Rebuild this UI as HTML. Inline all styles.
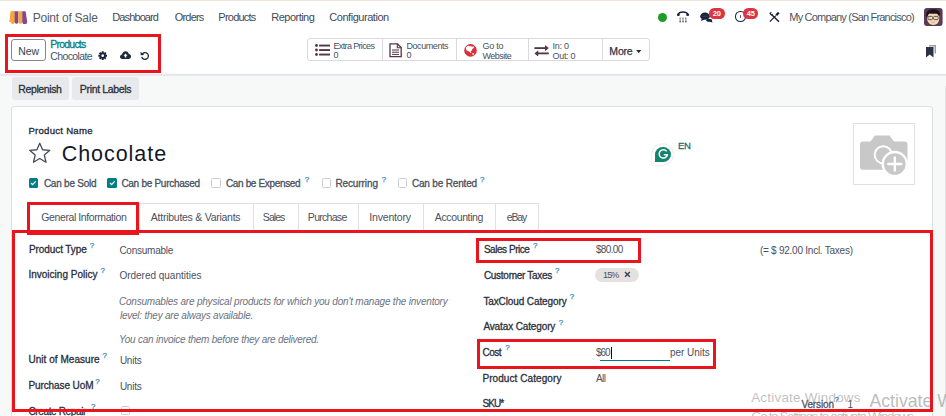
<!DOCTYPE html>
<html><head><meta charset="utf-8"><style>
html,body{margin:0;padding:0;width:946px;height:416px;overflow:hidden;background:#f7f8f8;font-family:"Liberation Sans",sans-serif;}
.a{position:absolute;box-sizing:border-box;}
.t{position:absolute;white-space:pre;font-family:"Liberation Sans",sans-serif;}
.qm{position:absolute;font-family:"Liberation Sans",sans-serif;font-size:8px;line-height:8px;font-weight:400;-webkit-text-stroke:0.25px;color:#3b8db5;}
.rb{position:absolute;box-sizing:border-box;border:3px solid #e9141c;}
</style></head><body>
<!-- top beige line -->
<div class="a" style="left:0;top:0;width:946px;height:1px;background:#efe3da"></div>
<!-- navbar + control panel white -->
<div class="a" style="left:0;top:1px;width:946px;height:72px;background:#fff"></div>
<div class="a" style="left:0;top:73.5px;width:946px;height:2px;background:#e6e8eb"></div>
<div class="a" style="left:944.6px;top:86px;width:1.4px;height:330px;background:#e4e4e4"></div>
<!-- logo -->
<svg class="a" style="left:9px;top:10.5px" width="19" height="13" viewBox="0 0 19 13">
  <path d="M1.8 0.3 H5.6 V10.8 a1.9 1.9 0 0 1 -3.8 0 H0.4 Z" fill="#f6a83b"/>
  <path d="M1.8 0.3 H5.6 V10.8 a1.9 1.9 0 0 1 -3.8 0 L0.6 10.8 Z" fill="#f6a83b"/>
  <path d="M5.6 0.3 H9.4 V10.8 a1.9 1.9 0 0 1 -3.8 0 Z" fill="#8b4784"/>
  <path d="M9.4 0.3 H13.2 V10.8 a1.9 1.9 0 0 1 -3.8 0 Z" fill="#f6a83b"/>
  <path d="M13.2 0.3 H16.6 L18.2 10.8 a2.1 2.1 0 0 1 -5 0 Z" fill="#8b4784"/>
</svg>
<!-- green dot -->
<div class="a" style="left:657.8px;top:12.7px;width:9px;height:9px;border-radius:50%;background:#1f9b2c"></div>
<!-- phone icon -->
<svg class="a" style="left:676px;top:10px" width="14" height="13" viewBox="0 0 14 13">
  <path d="M1.8 4.6 C3.5 1.2 10.5 1.2 12.2 4.6" fill="none" stroke="#1a2338" stroke-width="1.5"/>
  <ellipse cx="2.3" cy="4.9" rx="1.5" ry="1.1" fill="#1a2338"/>
  <ellipse cx="11.7" cy="4.9" rx="1.5" ry="1.1" fill="#1a2338"/>
  <g fill="#8a8093"><rect x="3.4" y="7.6" width="1.6" height="1.3"/><rect x="6.2" y="7.6" width="1.6" height="1.3"/><rect x="9" y="7.6" width="1.6" height="1.3"/>
  <rect x="3.4" y="9.4" width="1.6" height="1.3"/><rect x="6.2" y="9.4" width="1.6" height="1.3"/><rect x="9" y="9.4" width="1.6" height="1.3"/></g>
  <g fill="#4a4256"><rect x="3.4" y="11.2" width="1.6" height="1.1"/><rect x="6.2" y="11.2" width="1.6" height="1.1"/><rect x="9" y="11.2" width="1.6" height="1.1"/></g>
</svg>
<!-- chat icon -->
<svg class="a" style="left:699.5px;top:11.5px" width="13" height="11" viewBox="0 0 13 11">
  <path d="M7 7 C10.5 6.5 12.5 7.5 12 9 L12.6 10.6 L9.8 9.8 C8 10 6.5 9.5 6 8.5 Z" fill="#1a2338"/>
  <ellipse cx="5" cy="4.2" rx="4.8" ry="3.6" fill="#1a2338"/>
  <path d="M1.8 6.5 L0.9 9 L4.5 7.5 Z" fill="#1a2338"/>
  <g fill="#3d5a8a"><circle cx="3" cy="4.2" r="0.6"/><circle cx="5" cy="4.2" r="0.6"/><circle cx="7" cy="4.2" r="0.6"/></g>
</svg>
<div class="a" style="left:709px;top:8px;width:15.5px;height:10.5px;border-radius:5.25px;background:#dc3442;color:#fff;font:700 7.5px/12px 'Liberation Sans',sans-serif;text-align:center;letter-spacing:-0.2px">20</div>
<!-- clock icon -->
<div class="a" style="left:735.4px;top:11px;width:10.4px;height:10.6px;border-radius:50%;border:1.7px solid #1a2338"></div>
<div class="a" style="left:739.8px;top:14.5px;width:1.2px;height:3.5px;background:#6b6070"></div>
<div class="a" style="left:743.3px;top:8px;width:14.8px;height:10.5px;border-radius:5.25px;background:#dc3442;color:#fff;font:700 7.5px/12px 'Liberation Sans',sans-serif;text-align:center;letter-spacing:-0.2px">45</div>
<!-- tools icon -->
<svg class="a" style="left:768.8px;top:12px" width="11" height="10.5" viewBox="0 0 11 10.5">
  <path d="M2.2 2.2 L10 9.8" stroke="#1a2338" stroke-width="1.5"/>
  <path d="M0.3 1.6 C0.6 0.3 2 0 2.8 0.5 L1.8 1.8 L2.4 2.4 L3.5 1.4 C4 2.4 3.4 3.6 2 3.6 Z" fill="#1a2338"/>
  <path d="M9.8 0.6 L7.2 3.2" stroke="#1a2338" stroke-width="2.3"/>
  <path d="M6.8 3.6 L0.8 9.7" stroke="#1a2338" stroke-width="1.2"/>
</svg>
<!-- avatar -->
<svg class="a" style="left:924.2px;top:8px" width="18.6" height="18" viewBox="0 0 18.6 18">
  <rect x="0" y="0" width="18.6" height="18" rx="3" fill="#5a3a55"/>
  <path d="M3.2 9 C2.5 13.5 5.5 17 9.5 17 C13.5 17 15.8 13.5 15.2 8.5 L14 5.5 L5 5.5 Z" fill="#f4d6b2"/>
  <path d="M2.2 8.5 C1.5 4 4 1.5 8.5 1.2 C13 1 16 2.5 16 6 L15.2 8.5 C14.5 6.5 13 5 11 5.5 C9 6 6 5 4.5 6 C3.8 7 3.5 8 3.2 9.5 Z" fill="#1c1418"/>
  <rect x="4" y="8.4" width="4.6" height="3.2" rx="1" fill="none" stroke="#4a4a4a" stroke-width="0.9"/>
  <rect x="9.6" y="8.4" width="4.6" height="3.2" rx="1" fill="none" stroke="#4a4a4a" stroke-width="0.9"/>
  <path d="M7.5 14 Q9.5 15 11 13.8" fill="none" stroke="#c99" stroke-width="0.7"/>
</svg>
<!-- New button -->
<div class="a" style="left:11.2px;top:38.7px;width:35.3px;height:22.6px;border:1px solid #8a8494;border-radius:3px;background:#fff"></div>
<!-- gear -->
<svg class="a" style="left:97.8px;top:51.2px" width="9.4" height="9.4" viewBox="0 0 16 16">
  <path fill="#1a2338" fill-rule="evenodd" d="M13.35 6.35 L15.42 6.34 L15.42 9.66 L13.35 9.65 L12.95 10.61 L14.42 12.07 L12.07 14.42 L10.61 12.95 L9.65 13.35 L9.66 15.42 L6.34 15.42 L6.35 13.35 L5.39 12.95 L3.93 14.42 L1.58 12.07 L3.05 10.61 L2.65 9.65 L0.58 9.66 L0.58 6.34 L2.65 6.35 L3.05 5.39 L1.58 3.93 L3.93 1.58 L5.39 3.05 L6.35 2.65 L6.34 0.58 L9.66 0.58 L9.65 2.65 L10.61 3.05 L12.07 1.58 L14.42 3.93 L12.95 5.39 Z M10.3 8 A2.3 2.3 0 1 0 5.7 8 A2.3 2.3 0 1 0 10.3 8 Z"/>
</svg>
<!-- cloud upload -->
<svg class="a" style="left:120px;top:50.5px" width="11" height="8.5" viewBox="0 0 22 17">
  <path fill="#1f2937" d="M5 16 C1.5 16 0 13.5 0 11.5 C0 9 2 7.3 4 7 C4.5 3 7.5 0.5 11 0.5 C14.5 0.5 17 3 17.8 6 C20.3 6.3 22 8.5 22 11 C22 13.8 20 16 17 16 Z"/>
  <path fill="#fff" d="M11 5 L15 9.5 H12.5 V13 H9.5 V9.5 H7 Z"/>
</svg>
<!-- undo -->
<svg class="a" style="left:140px;top:50.5px" width="9.5" height="9.3" viewBox="0 0 16 16">
  <path d="M3.5 5.5 A5.8 5.8 0 1 1 2.8 10" fill="none" stroke="#1f2937" stroke-width="2.3"/>
  <path d="M0.8 1.5 L1 7.5 L7 7 Z" fill="#1f2937"/>
</svg>
<!-- button group -->
<div class="a" style="left:306.5px;top:38.2px;width:343px;height:23.3px;border:1px solid #d8dadd;border-radius:3px;background:#fff"></div>
<div class="a" style="left:382px;top:39px;width:1px;height:22px;background:#d8dadd"></div>
<div class="a" style="left:456px;top:39px;width:1px;height:22px;background:#d8dadd"></div>
<div class="a" style="left:528px;top:39px;width:1px;height:22px;background:#d8dadd"></div>
<div class="a" style="left:601.5px;top:39px;width:1px;height:22px;background:#d8dadd"></div>
<!-- list icon -->
<svg class="a" style="left:314.8px;top:43.7px" width="15.2" height="12" viewBox="0 0 15 12">
  <g fill="#553646"><circle cx="1.4" cy="1.5" r="1.4"/><circle cx="1.4" cy="6" r="1.4"/><circle cx="1.4" cy="10.5" r="1.4"/>
  <rect x="4" y="0.6" width="11" height="1.9"/><rect x="4" y="5.1" width="11" height="1.9"/><rect x="4" y="9.6" width="11" height="1.9"/></g>
</svg>
<!-- document icon -->
<svg class="a" style="left:389px;top:43px" width="13" height="14.5" viewBox="0 0 13 14.5">
  <path d="M1 0.8 H8.5 L12.2 4.5 V13.7 H1 Z" fill="none" stroke="#553646" stroke-width="1.3"/>
  <path d="M8.3 0.8 V4.7 H12.2" fill="none" stroke="#553646" stroke-width="1.1"/>
  <g fill="#553646"><rect x="3" y="6.5" width="7" height="1"/><rect x="3" y="8.7" width="7" height="1"/><rect x="3" y="10.9" width="7" height="1"/></g>
</svg>
<!-- globe icon -->
<svg class="a" style="left:464.4px;top:43.5px" width="13" height="13" viewBox="464.4 43.5 13 13">
  <circle cx="470.9" cy="49.9" r="6.3" fill="#d9303c"/>
  <path d="M466.3 47.2 C466.8 45.6 468.5 45 469.6 45.2 L470.2 46 L471.2 45.5 L472.6 46.2 L474.6 45.8 L474 47.6 L472.8 48.4 L472.2 50 L471.2 50.8 L471.8 52.6 L470.6 52.2 L469.4 50.8 L468.2 50.8 L467 49.8 C466.4 49 466.2 48 466.3 47.2 Z" fill="#fff"/>
  <circle cx="473.6" cy="53.4" r="0.9" fill="#fff"/>
</svg>
<!-- arrows icon -->
<svg class="a" style="left:534px;top:44.6px" width="15.2" height="11.5" viewBox="0 0 15 12">
  <g fill="#553646"><rect x="0" y="2.3" width="12" height="1.9"/><path d="M11 0 L15 3.25 L11 6.5 Z"/>
  <rect x="3" y="7.8" width="12" height="1.9"/><path d="M4 5.5 L0 8.75 L4 12 Z"/></g>
</svg>
<!-- caret -->
<svg class="a" style="left:636px;top:49.8px" width="5.5" height="3.5" viewBox="0 0 6 4"><path d="M0 0 H6 L3 3.5 Z" fill="#1f2937"/></svg>
<!-- bookmark icon -->
<svg class="a" style="left:926px;top:45px" width="10" height="12.5" viewBox="0 0 10 12.5">
  <path d="M3 0 H10 V9 L8.5 8 V1.5 H3 Z" fill="#9aa0aa"/>
  <path d="M0 2 H7.5 V12.5 L3.75 9.5 L0 12.5 Z" fill="#2b3446"/>
</svg>
<!-- action buttons -->
<div class="a" style="left:11.5px;top:77.1px;width:57.5px;height:22.5px;border-radius:3px;background:#e7e9ed"></div>
<div class="a" style="left:72.4px;top:77.1px;width:66.6px;height:22.5px;border-radius:3px;background:#e7e9ed"></div>
<!-- card -->
<div class="a" style="left:11px;top:105.5px;width:922px;height:330px;border:1px solid #dcdee2;border-radius:3px;background:#fff"></div>
<!-- star -->
<svg class="a" style="left:28px;top:141.5px" width="23.5" height="22" viewBox="0 0 24 22.5">
  <path d="M12 1.3 L14.9 7.9 L22.3 8.5 L16.7 13.4 L18.4 20.7 L12 16.9 L5.6 20.7 L7.3 13.4 L1.7 8.5 L9.1 7.9 Z" fill="none" stroke="#464c59" stroke-width="1.35" stroke-linejoin="round"/>
</svg>
<!-- checkboxes -->
<div class="a" style="left:28.8px;top:178.2px;width:9.6px;height:9.8px;border-radius:1.5px;background:#017e84"></div>
<svg class="a" style="left:30.3px;top:180px" width="6.6" height="6" viewBox="0 0 7 6"><path d="M1 3 L2.8 4.8 L6 1.2" fill="none" stroke="#fff" stroke-width="1.3"/></svg>
<div class="a" style="left:107.1px;top:178.2px;width:9.6px;height:9.8px;border-radius:1.5px;background:#017e84"></div>
<svg class="a" style="left:108.6px;top:180px" width="6.6" height="6" viewBox="0 0 7 6"><path d="M1 3 L2.8 4.8 L6 1.2" fill="none" stroke="#fff" stroke-width="1.3"/></svg>
<div class="a" style="left:211.4px;top:178.2px;width:9.6px;height:9.8px;border-radius:1.5px;border:1px solid #c9ccd2;background:#fff"></div>
<div class="a" style="left:321.5px;top:178.2px;width:9.6px;height:9.8px;border-radius:1.5px;border:1px solid #c9ccd2;background:#fff"></div>
<div class="a" style="left:397.5px;top:178.2px;width:9.6px;height:9.8px;border-radius:1.5px;border:1px solid #c9ccd2;background:#fff"></div>
<!-- grammarly -->
<div class="a" style="left:652px;top:144.4px;width:21px;height:20.2px;border-radius:50% 50% 50% 0;background:#fff;box-shadow:0 0 1.5px rgba(0,0,0,0.25)"></div>
<div class="a" style="left:655px;top:146.8px;width:15.8px;height:15.4px;border-radius:50% 50% 50% 0;background:#15846f"></div>
<svg class="a" style="left:656.5px;top:148.3px" width="12.5" height="12.5" viewBox="0 0 12 12">
  <path d="M9.3 3.3 A4 4 0 1 0 10 6.5 H6.5" fill="none" stroke="#fff" stroke-width="1.4"/>
</svg>
<span class="t" style="left:678px;top:141.3px;font-size:9.5px;line-height:9.5px;color:#1d6f7a;letter-spacing:-0.4px;-webkit-text-stroke:0.3px">EN</span>
<!-- image placeholder -->
<div class="a" style="left:852.5px;top:123px;width:62.5px;height:62.2px;border:1px solid #dee0e3;background:#fff"></div>
<svg class="a" style="left:852px;top:123px" width="63" height="63" viewBox="852 123 63 63">
  <path d="M863 141.5 H870.5 L875 135.5 H889.5 L894 141.5 H904.5 A3 3 0 0 1 907.5 144.5 V166.8 A3 3 0 0 1 904.5 169.8 H863 A3 3 0 0 1 860 166.8 V144.5 A3 3 0 0 1 863 141.5 Z" fill="#c8c8c8"/>
  <circle cx="883.3" cy="154.8" r="9.6" fill="#fff"/>
  <circle cx="883.3" cy="154.8" r="7.6" fill="#c8c8c8"/>
  <circle cx="894.8" cy="164" r="13.2" fill="#fff"/>
  <circle cx="894.8" cy="164" r="10.8" fill="#c8c8c8"/>
  <path d="M894.8 156.5 V171.5 M887.3 164 H902.3" stroke="#fff" stroke-width="2.4"/>
</svg>
<!-- tabs -->
<div class="a" style="left:27px;top:203.3px;width:511.5px;height:27.5px;border:1px solid #dee0e3;border-bottom:none;background:#fff"></div>
<div class="a" style="left:139px;top:203.3px;width:1px;height:27px;background:#dee0e3"></div>
<div class="a" style="left:252.5px;top:203.3px;width:1px;height:27px;background:#dee0e3"></div>
<div class="a" style="left:297.5px;top:203.3px;width:1px;height:27px;background:#dee0e3"></div>
<div class="a" style="left:358.4px;top:203.3px;width:1px;height:27px;background:#dee0e3"></div>
<div class="a" style="left:422.7px;top:203.3px;width:1px;height:27px;background:#dee0e3"></div>
<div class="a" style="left:495.4px;top:203.3px;width:1px;height:27px;background:#dee0e3"></div>
<div class="a" style="left:27px;top:230.5px;width:906px;height:1px;background:#dee0e3"></div>
<!-- tax pill -->
<div class="a" style="left:594.9px;top:268.1px;width:43.8px;height:14.1px;border-radius:7px;background:#e6e1e1"></div>
<svg class="a" style="left:624px;top:271px" width="6.8" height="6.8" viewBox="0 0 7 7"><path d="M1 1 L6 6 M6 1 L1 6" stroke="#374151" stroke-width="1.4"/></svg>
<!-- cost input underline + cursor -->
<div class="a" style="left:600px;top:360px;width:70px;height:1px;background:#017e84"></div>
<div class="a" style="left:611.3px;top:347px;width:1px;height:12px;background:#111"></div>
<!-- create repair checkbox -->
<div class="a" style="left:120.5px;top:405.5px;width:9px;height:9px;border-radius:1.5px;border:1px solid #c9ccd2;background:#fff"></div>

<span class='t' style='left:32.78px;top:10.64px;font-size:12px;line-height:14.4px;font-weight:400;font-style:normal;color:#555b66;letter-spacing:-0.250px;'>Point of Sale</span><span class='t' style='left:112.34px;top:10.89px;font-size:11px;line-height:13.2px;font-weight:400;font-style:normal;color:#434955;letter-spacing:-0.900px;'>Dashboard</span><span class='t' style='left:174.84px;top:10.89px;font-size:11px;line-height:13.2px;font-weight:400;font-style:normal;color:#434955;letter-spacing:-0.840px;'>Orders</span><span class='t' style='left:218.34px;top:10.89px;font-size:11px;line-height:13.2px;font-weight:400;font-style:normal;color:#434955;letter-spacing:-0.771px;'>Products</span><span class='t' style='left:271.34px;top:10.89px;font-size:11px;line-height:13.2px;font-weight:400;font-style:normal;color:#434955;letter-spacing:-0.525px;'>Reporting</span><span class='t' style='left:329.34px;top:10.89px;font-size:11px;line-height:13.2px;font-weight:400;font-style:normal;color:#434955;letter-spacing:-0.467px;'>Configuration</span><span class='t' style='left:789.34px;top:10.89px;font-size:11px;line-height:13.2px;font-weight:400;font-style:normal;color:#4b5563;letter-spacing:-0.808px;'>My Company (San Francisco)</span><span class='t' style='left:18.37px;top:44.66px;font-size:10.5px;line-height:12.6px;font-weight:400;font-style:normal;color:#374151;letter-spacing:-0.100px;'>New</span><span class='t' style='left:50.37px;top:38.36px;font-size:10.5px;line-height:12.6px;font-weight:400;font-style:normal;color:#017e84;letter-spacing:-0.800px;-webkit-text-stroke:0.3px'>Products</span><span class='t' style='left:50.37px;top:50.46px;font-size:10.5px;line-height:12.6px;font-weight:400;font-style:normal;color:#4b5563;letter-spacing:-0.625px;'>Chocolate</span><span class='t' style='left:333.46px;top:40.88px;font-size:9px;line-height:10.8px;font-weight:400;font-style:normal;color:#4a505c;letter-spacing:-0.636px;'>Extra Prices</span><span class='t' style='left:333.46px;top:50.38px;font-size:9px;line-height:10.8px;font-weight:400;font-style:normal;color:#4a505c;letter-spacing:0.000px;'>0</span><span class='t' style='left:406.46px;top:40.88px;font-size:9px;line-height:10.8px;font-weight:400;font-style:normal;color:#4a505c;letter-spacing:-0.425px;'>Documents</span><span class='t' style='left:406.46px;top:50.38px;font-size:9px;line-height:10.8px;font-weight:400;font-style:normal;color:#4a505c;letter-spacing:0.000px;'>0</span><span class='t' style='left:482.46px;top:40.58px;font-size:9px;line-height:10.8px;font-weight:400;font-style:normal;color:#4a505c;letter-spacing:-0.250px;'>Go to</span><span class='t' style='left:482.46px;top:50.58px;font-size:9px;line-height:10.8px;font-weight:400;font-style:normal;color:#4a505c;letter-spacing:-0.500px;'>Website</span><span class='t' style='left:552.46px;top:40.58px;font-size:9px;line-height:10.8px;font-weight:400;font-style:normal;color:#4a505c;letter-spacing:-0.250px;'>In: 0</span><span class='t' style='left:552.46px;top:50.58px;font-size:9px;line-height:10.8px;font-weight:400;font-style:normal;color:#4a505c;letter-spacing:-0.280px;'>Out: 0</span><span class='t' style='left:609.37px;top:45.26px;font-size:10.5px;line-height:12.6px;font-weight:400;font-style:normal;color:#2f3541;letter-spacing:-0.200px;-webkit-text-stroke:0.25px'>More</span><span class='t' style='left:18.37px;top:82.96px;font-size:10.5px;line-height:12.6px;font-weight:400;font-style:normal;color:#2a2f3a;letter-spacing:-0.400px;-webkit-text-stroke:0.3px'>Replenish</span><span class='t' style='left:79.87px;top:82.96px;font-size:10.5px;line-height:12.6px;font-weight:400;font-style:normal;color:#2a2f3a;letter-spacing:-0.345px;-webkit-text-stroke:0.3px'>Print Labels</span><span class='t' style='left:28.42px;top:124.91px;font-size:9.6px;line-height:11.52px;font-weight:400;font-style:normal;color:#1f2937;letter-spacing:0.255px;-webkit-text-stroke:0.3px'>Product Name</span><span class='t' style='left:61.71px;top:142.25px;font-size:21.5px;line-height:25.8px;font-weight:400;font-style:normal;color:#111827;letter-spacing:0.950px;'>Chocolate</span><span class='t' style='left:43.90px;top:178.33px;font-size:10px;line-height:12.0px;font-weight:400;font-style:normal;color:#4a505c;letter-spacing:-0.240px;-webkit-text-stroke:0.3px'>Can be Sold</span><span class='t' style='left:121.40px;top:178.33px;font-size:10px;line-height:12.0px;font-weight:400;font-style:normal;color:#4a505c;letter-spacing:-0.280px;-webkit-text-stroke:0.3px'>Can be Purchased</span><span class='t' style='left:225.90px;top:178.33px;font-size:10px;line-height:12.0px;font-weight:400;font-style:normal;color:#4a505c;letter-spacing:-0.343px;-webkit-text-stroke:0.3px'>Can be Expensed</span><span class='t' style='left:335.40px;top:178.33px;font-size:10px;line-height:12.0px;font-weight:400;font-style:normal;color:#4a505c;letter-spacing:-0.100px;-webkit-text-stroke:0.3px'>Recurring</span><span class='t' style='left:411.90px;top:178.33px;font-size:10px;line-height:12.0px;font-weight:400;font-style:normal;color:#4a505c;letter-spacing:-0.167px;-webkit-text-stroke:0.3px'>Can be Rented</span><span class='t' style='left:41.37px;top:211.16px;font-size:10.5px;line-height:12.6px;font-weight:400;font-style:normal;color:#4a505c;letter-spacing:-0.411px;'>General Information</span><span class='t' style='left:150.87px;top:211.16px;font-size:10.5px;line-height:12.6px;font-weight:400;font-style:normal;color:#4a505c;letter-spacing:-0.260px;'>Attributes &amp; Variants</span><span class='t' style='left:262.87px;top:211.16px;font-size:10.5px;line-height:12.6px;font-weight:400;font-style:normal;color:#4a505c;letter-spacing:-0.950px;'>Sales</span><span class='t' style='left:307.87px;top:211.16px;font-size:10.5px;line-height:12.6px;font-weight:400;font-style:normal;color:#4a505c;letter-spacing:-0.714px;'>Purchase</span><span class='t' style='left:369.37px;top:211.16px;font-size:10.5px;line-height:12.6px;font-weight:400;font-style:normal;color:#4a505c;letter-spacing:-0.200px;'>Inventory</span><span class='t' style='left:434.87px;top:211.16px;font-size:10.5px;line-height:12.6px;font-weight:400;font-style:normal;color:#4a505c;letter-spacing:-0.378px;'>Accounting</span><span class='t' style='left:506.87px;top:211.16px;font-size:10.5px;line-height:12.6px;font-weight:400;font-style:normal;color:#4a505c;letter-spacing:-1.200px;'>eBay</span><span class='t' style='left:28.90px;top:244.13px;font-size:10px;line-height:12.0px;font-weight:400;font-style:normal;color:#2a2f3a;letter-spacing:-0.073px;-webkit-text-stroke:0.3px'>Product Type</span><span class='t' style='left:119.40px;top:244.73px;font-size:10px;line-height:12.0px;font-weight:400;font-style:normal;color:#4a505c;letter-spacing:-0.244px;'>Consumable</span><span class='t' style='left:28.40px;top:269.44px;font-size:10px;line-height:12.0px;font-weight:400;font-style:normal;color:#2a2f3a;letter-spacing:0.013px;-webkit-text-stroke:0.3px'>Invoicing Policy</span><span class='t' style='left:119.40px;top:269.64px;font-size:10px;line-height:12.0px;font-weight:400;font-style:normal;color:#4a505c;letter-spacing:-0.012px;'>Ordered quantities</span><span class='t' style='left:118.90px;top:296.24px;font-size:10px;line-height:12.0px;font-weight:400;font-style:italic;color:#6b7280;letter-spacing:-0.197px;'>Consumables are physical products for which you don&#x27;t manage the inventory</span><span class='t' style='left:119.90px;top:310.34px;font-size:10px;line-height:12.0px;font-weight:400;font-style:italic;color:#6b7280;letter-spacing:-0.225px;'>level: they are always available.</span><span class='t' style='left:118.90px;top:333.54px;font-size:10px;line-height:12.0px;font-weight:400;font-style:italic;color:#6b7280;letter-spacing:-0.239px;'>You can invoice them before they are delivered.</span><span class='t' style='left:28.40px;top:354.44px;font-size:10px;line-height:12.0px;font-weight:400;font-style:normal;color:#2a2f3a;letter-spacing:0.043px;-webkit-text-stroke:0.3px'>Unit of Measure</span><span class='t' style='left:119.90px;top:355.04px;font-size:10px;line-height:12.0px;font-weight:400;font-style:normal;color:#4a505c;letter-spacing:-0.250px;'>Units</span><span class='t' style='left:28.40px;top:380.14px;font-size:10px;line-height:12.0px;font-weight:400;font-style:normal;color:#2a2f3a;letter-spacing:-0.091px;-webkit-text-stroke:0.3px'>Purchase UoM</span><span class='t' style='left:119.90px;top:380.64px;font-size:10px;line-height:12.0px;font-weight:400;font-style:normal;color:#4a505c;letter-spacing:-0.250px;'>Units</span><span class='t' style='left:28.40px;top:405.74px;font-size:10px;line-height:12.0px;font-weight:400;font-style:normal;color:#2a2f3a;letter-spacing:-0.350px;-webkit-text-stroke:0.3px'>Create Repair</span><span class='t' style='left:483.90px;top:243.83px;font-size:10px;line-height:12.0px;font-weight:400;font-style:normal;color:#2a2f3a;letter-spacing:-0.460px;-webkit-text-stroke:0.3px'>Sales Price</span><span class='t' style='left:595.90px;top:244.13px;font-size:10px;line-height:12.0px;font-weight:400;font-style:normal;color:#4a505c;letter-spacing:-0.640px;'>$80.00</span><span class='t' style='left:759.90px;top:244.63px;font-size:10px;line-height:12.0px;font-weight:400;font-style:normal;color:#4a505c;letter-spacing:-0.245px;'>(= $ 92.00 Incl. Taxes)</span><span class='t' style='left:483.90px;top:269.74px;font-size:10px;line-height:12.0px;font-weight:400;font-style:normal;color:#2a2f3a;letter-spacing:-0.277px;-webkit-text-stroke:0.3px'>Customer Taxes</span><span class='t' style='left:602.96px;top:270.28px;font-size:9px;line-height:10.8px;font-weight:400;font-style:normal;color:#4a505c;letter-spacing:-0.800px;'>15%</span><span class='t' style='left:483.40px;top:295.64px;font-size:10px;line-height:12.0px;font-weight:400;font-style:normal;color:#2a2f3a;letter-spacing:-0.113px;-webkit-text-stroke:0.3px'>TaxCloud Category</span><span class='t' style='left:483.40px;top:321.14px;font-size:10px;line-height:12.0px;font-weight:400;font-style:normal;color:#2a2f3a;letter-spacing:-0.129px;-webkit-text-stroke:0.3px'>Avatax Category</span><span class='t' style='left:482.40px;top:346.94px;font-size:10px;line-height:12.0px;font-weight:400;font-style:normal;color:#2a2f3a;letter-spacing:-0.467px;-webkit-text-stroke:0.3px'>Cost</span><span class='t' style='left:595.90px;top:347.14px;font-size:10px;line-height:12.0px;font-weight:400;font-style:normal;color:#4a505c;letter-spacing:-1.000px;'>$60</span><span class='t' style='left:669.90px;top:347.14px;font-size:10px;line-height:12.0px;font-weight:400;font-style:normal;color:#4a505c;letter-spacing:-0.025px;'>per Units</span><span class='t' style='left:482.40px;top:373.14px;font-size:10px;line-height:12.0px;font-weight:400;font-style:normal;color:#2a2f3a;letter-spacing:0.080px;-webkit-text-stroke:0.3px'>Product Category</span><span class='t' style='left:595.90px;top:373.44px;font-size:10px;line-height:12.0px;font-weight:400;font-style:normal;color:#4a505c;letter-spacing:-0.500px;'>All</span><span class='t' style='left:482.40px;top:398.14px;font-size:10px;line-height:12.0px;font-weight:400;font-style:normal;color:#2a2f3a;letter-spacing:-0.867px;-webkit-text-stroke:0.3px'>SKU*</span><span class='t' style='left:801.40px;top:398.74px;font-size:10px;line-height:12.0px;font-weight:400;font-style:normal;color:#4b5563;letter-spacing:-0.100px;-webkit-text-stroke:0.3px'>Version</span><span class='t' style='left:847.40px;top:398.74px;font-size:10px;line-height:12.0px;font-weight:400;font-style:normal;color:#4a505c;letter-spacing:0.000px;'>1</span><span class='t' style='left:751.20px;top:389.92px;font-size:13.4px;line-height:16.08px;font-weight:400;font-style:normal;color:rgba(130,130,130,0.5);letter-spacing:0.240px;'>Activate Windows</span><span class='t' style='left:751.20px;top:408.92px;font-size:13.4px;line-height:16.08px;font-weight:400;font-style:normal;color:rgba(130,130,130,0.5);letter-spacing:-1.353px;'>Go to Settings to activate Windows.</span><span class='t' style='left:869.44px;top:391.15px;font-size:17.7px;line-height:21.24px;font-weight:400;font-style:normal;color:rgba(120,120,120,0.5);letter-spacing:0.000px;'>Activate W</span>
<span class='qm' style='left:304.8px;top:176.3px'>?</span><span class='qm' style='left:381.7px;top:176.3px'>?</span><span class='qm' style='left:480.0px;top:176.3px'>?</span><span class='qm' style='left:89.8px;top:242.3px'>?</span><span class='qm' style='left:100.4px;top:267.3px'>?</span><span class='qm' style='left:102.6px;top:352.3px'>?</span><span class='qm' style='left:95.2px;top:377.8px'>?</span><span class='qm' style='left:91.0px;top:403.3px'>?</span><span class='qm' style='left:532.9px;top:241.8px'>?</span><span class='qm' style='left:555.0px;top:267.3px'>?</span><span class='qm' style='left:569.7px;top:292.8px'>?</span><span class='qm' style='left:558.7px;top:318.8px'>?</span><span class='qm' style='left:505.2px;top:344.3px'>?</span><span class='qm' style='left:834.6px;top:396.3px'>?</span>
<div class="rb" style="left:5px;top:34px;width:156px;height:39.3px"></div>
<div class="rb" style="left:27px;top:202.2px;width:111.7px;height:32.4px"></div>
<div class="rb" style="left:12px;top:230.1px;width:921px;height:181.5px"></div>
<div class="rb" style="left:476px;top:238.4px;width:165.1px;height:24.3px"></div>
<div class="rb" style="left:476.9px;top:339.1px;width:239.6px;height:30.3px"></div>

</body></html>
